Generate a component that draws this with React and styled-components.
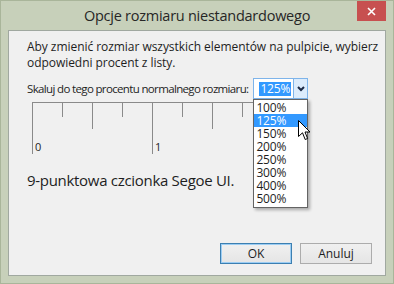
import React from 'react';
import styled, { createGlobalStyle, css } from 'styled-components';

const Global = createGlobalStyle`
  html, body { margin: 0; padding: 0; }
  body {
    width: 394px;
    height: 284px;
    overflow: hidden;
    background: #c7d0ba;
    font-family: "Open Sans", "Noto Sans", sans-serif;
    color: #1e1e1e;
  }
`;

const Window = styled.div`
  width: 394px;
  height: 284px;
  display: flex;
  flex-direction: column;
  box-sizing: border-box;
  border: 1px solid #a9b59a;
`;

const TitleBar = styled.div`
  position: relative;
  height: 29px;
  display: flex;
  align-items: center;
  justify-content: center;
  font-size: 14.5px;
  letter-spacing: -0.25px;
  color: #262626;
`;

const CloseButton = styled.div`
  position: absolute;
  top: 0;
  right: 7px;
  width: 29px;
  height: 20px;
  background: #c75050;
  display: flex;
  align-items: center;
  justify-content: center;
`;

const Client = styled.div`
  margin: 0 7px 7px 7px;
  flex: 1;
  background: #f0f0f0;
  border: 1px solid #a0a8a0;
  display: flex;
  flex-direction: column;
  padding: 8px 13px 11px 18px;
  font-size: 12px;
  white-space: nowrap;
`;

const Description = styled.p`
  margin: 0;
  line-height: 16px;
  letter-spacing: -0.05px;
`;

const ScaleRow = styled.div`
  margin-top: 7px;
  display: flex;
  align-items: center;
  gap: 5px;
  height: 21px;
`;

const Label = styled.span`
  font-size: 11.5px;
  letter-spacing: -0.65px;
`;

const Combo = styled.div`
  position: relative;
  width: 53px;
  height: 19px;
  border: 1px solid #7eb4ea;
  background: #fff;
  display: flex;
`;

const ComboField = styled.div`
  flex: 1;
  display: flex;
  align-items: center;
  padding-left: 5px;
`;

const Selected = styled.span`
  background: #3399ff;
  color: #fff;
  line-height: 14px;
  padding: 0 1px;
  letter-spacing: -0.2px;
`;

const ComboButton = styled.div`
  width: 13px;
  border-left: 1px solid #7eb4ea;
  background: #dcecfc;
  display: flex;
  align-items: center;
  justify-content: center;
`;

const List = styled.div`
  position: absolute;
  top: 20px;
  left: -1px;
  width: 53px;
  border: 1px solid #646464;
  background: #fff;
  padding: 1px 0 2px;
  box-shadow: 2px 2px 3px rgba(0, 0, 0, 0.3);
  z-index: 2;
`;

const Item = styled.div`
  height: 13px;
  line-height: 13px;
  padding-left: 2px;
  letter-spacing: -0.2px;
  ${p => p.active && css`
    background: #3399ff;
    color: #fff;
  `}
`;

const Cursor = styled.svg`
  position: absolute;
  left: 44px;
  top: 41px;
  z-index: 3;
`;

const Ruler = styled.svg`
  display: block;
  margin: 3px 0 0 5px;
`;

const Sample = styled.div`
  margin-top: 14px;
  font-size: 15px;
  line-height: 22px;
  letter-spacing: -0.3px;
`;

const Buttons = styled.div`
  margin-top: auto;
  display: flex;
  justify-content: flex-end;
  gap: 8px;
`;

const Button = styled.div`
  width: 72px;
  height: 21px;
  box-sizing: border-box;
  border: 1px solid #acacac;
  background: linear-gradient(#f0f0f0, #e5e5e5);
  display: flex;
  align-items: center;
  justify-content: center;
  font-size: 12px;
  ${p => p.primary && css`
    border-color: #3c7fb1;
    box-shadow: inset 0 0 0 1px #9ccdf3;
  `}
`;

const sizes = ['100%', '125%', '150%', '200%', '250%', '300%', '400%', '500%'];

function RulerDrawing() {
  const ticks = [];
  for (let i = 1; i <= 9; i++) {
    const x = 0.5 + i * 30;
    const len = i % 4 === 0 ? 52 : i % 2 === 0 ? 27 : 15;
    ticks.push(<line key={i} x1={x} y1={0.5} x2={x} y2={len} stroke="#8a8a8a" />);
  }
  return (
    <Ruler width="268" height="53" viewBox="0 0 268 53">
      <line x1="0" y1="0.5" x2="268" y2="0.5" stroke="#8a8a8a" />
      <line x1="0.5" y1="0" x2="0.5" y2="52" stroke="#8a8a8a" />
      {ticks}
      <text x="3" y="49" fontSize="11" fill="#1e1e1e" fontFamily="Open Sans, sans-serif">0</text>
      <text x="123" y="49" fontSize="11" fill="#1e1e1e" fontFamily="Open Sans, sans-serif">1</text>
    </Ruler>
  );
}

export default function App() {
  return (
    <>
      <Global />
      <Window>
        <TitleBar>
          Opcje rozmiaru niestandardowego
          <CloseButton>
            <svg width="9" height="9" viewBox="0 0 9 9">
              <path d="M1 1 L8 8 M8 1 L1 8" stroke="#fff" strokeWidth="1.6" />
            </svg>
          </CloseButton>
        </TitleBar>
        <Client>
          <Description>
            Aby zmienić rozmiar wszystkich elementów na pulpicie, wybierz
            <br />
            odpowiedni procent z listy.
          </Description>
          <ScaleRow>
            <Label>Skaluj do tego procentu normalnego rozmiaru:</Label>
            <Combo>
              <ComboField>
                <Selected>125%</Selected>
              </ComboField>
              <ComboButton>
                <svg width="8" height="6" viewBox="0 0 8 6">
                  <path d="M1 1 L4 4 L7 1" fill="none" stroke="#1c2a45" strokeWidth="2" />
                </svg>
              </ComboButton>
              <List>
                {sizes.map(s => (
                  <Item key={s} active={s === '125%'}>{s}</Item>
                ))}
              </List>
              <Cursor width="13" height="21" viewBox="0 0 13 21">
                <path
                  d="M0.5 0.5 L0.5 16.5 L4.5 12.8 L7.2 19.5 L9.6 18.5 L7 12 L12 12 Z"
                  fill="#fff"
                  stroke="#000"
                  strokeWidth="1"
                />
              </Cursor>
            </Combo>
          </ScaleRow>
          <RulerDrawing />
          <Sample>9-punktowa czcionka Segoe UI.</Sample>
          <Buttons>
            <Button primary>OK</Button>
            <Button>Anuluj</Button>
          </Buttons>
        </Client>
      </Window>
    </>
  );
}
